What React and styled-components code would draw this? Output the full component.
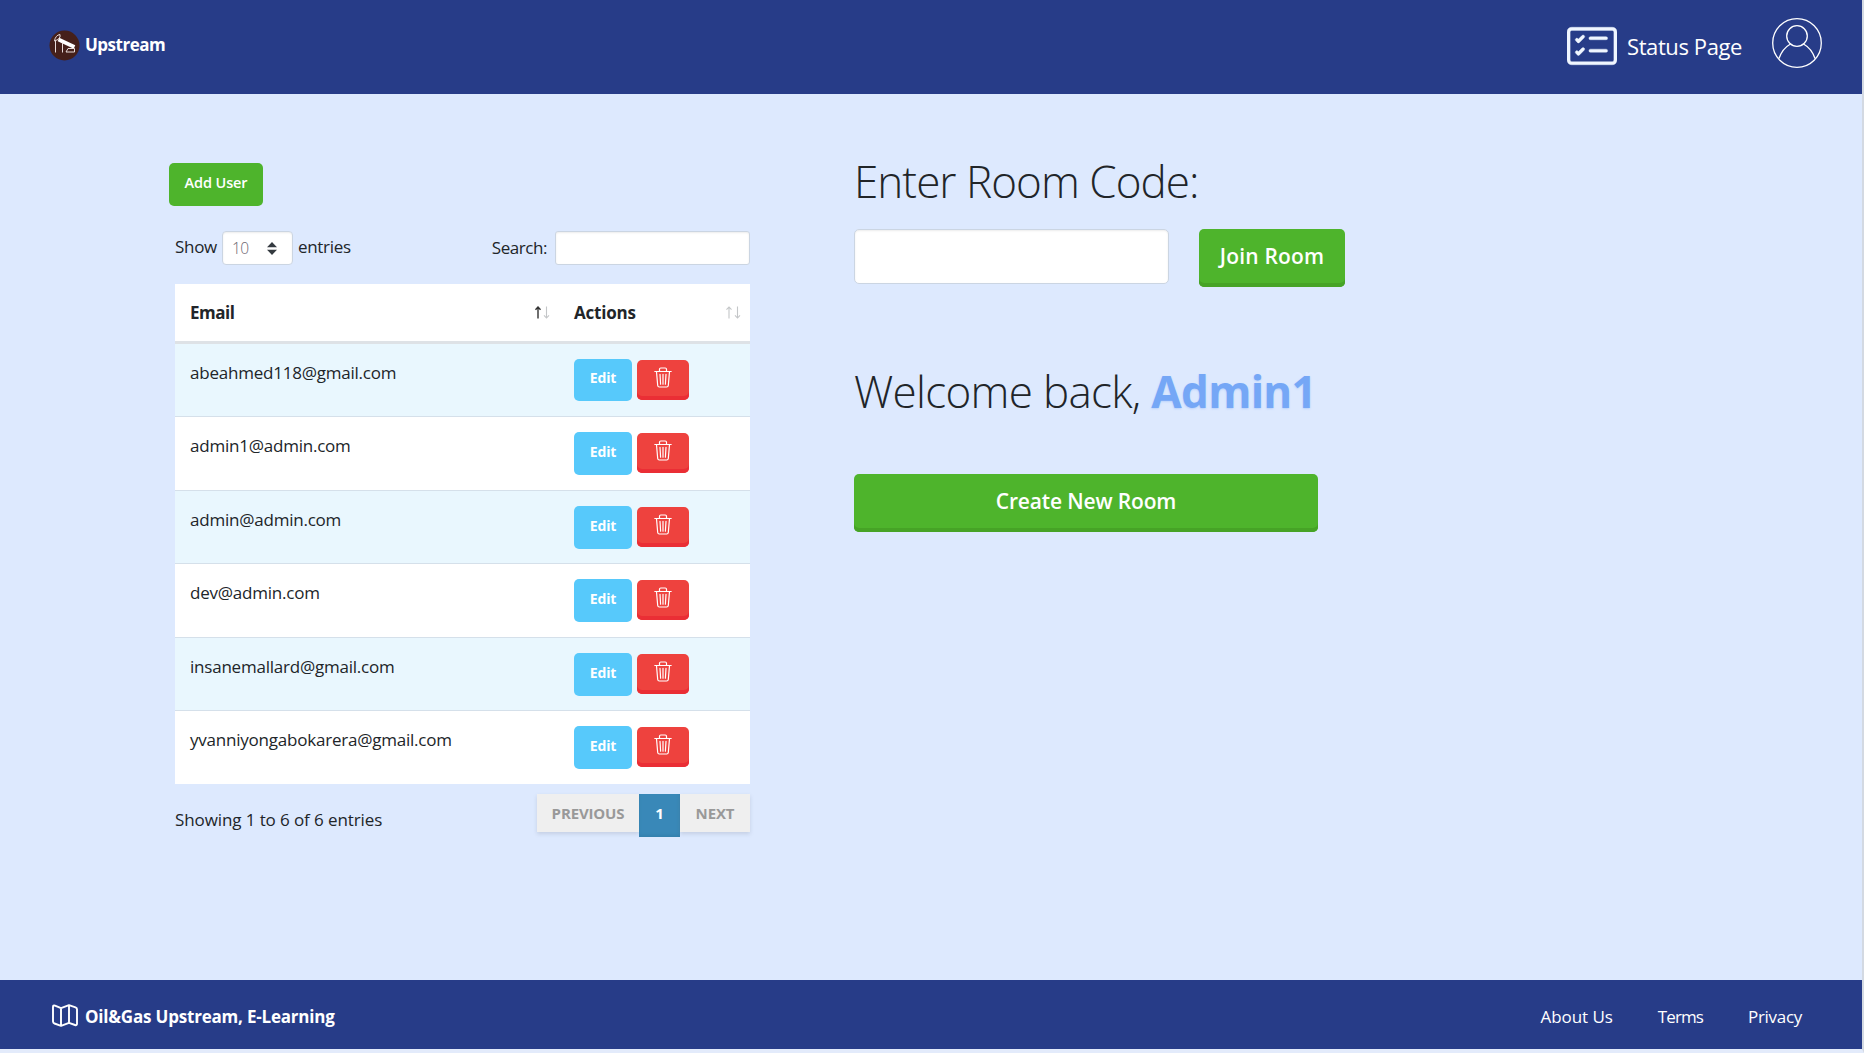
import React from "react";
import styled, { createGlobalStyle, css } from "styled-components";

const Global = createGlobalStyle`
  *, *::before, *::after { box-sizing: border-box; }
  body {
    margin: 0;
    background: #dde9fe;
    color: #212529;
    font: 400 16px/24px "Open Sans", "Noto Sans", sans-serif;
    overflow: hidden;
  }
  button, input { font-family: inherit; }
`;

const Page = styled.div`
  height: 1053px;
  display: flex;
  flex-direction: column;
  border-right: 2px solid #d3d9e2;
  border-bottom: 4px solid #e3ebfb;
`;
const bar = css`
  background: #273c88;
  color: #fff;
  display: flex;
  align-items: center;
  justify-content: space-between;
  flex: none;
`;
const Header = styled.header`
  ${bar}
  height: 94px;
  padding: 0 40px 4px 49px;
`;
const Footer = styled.footer`
  ${bar}
  height: 69px;
  padding: 4px 60px 0 52px;
`;
const Label = styled.span`
  display: inline-block;
  white-space: nowrap;
  font-size: ${(p) => p.$size || 17}px;
  font-weight: ${(p) => p.$weight || 400};
  letter-spacing: ${(p) => p.$track || 0}px;
`;
const Brand = styled.a`
  display: flex;
  align-items: center;
  gap: ${(p) => p.$gap}px;
`;
const Account = styled.nav`
  display: flex;
  align-items: flex-start;
  height: 54px;
`;
const StatusLink = styled.a`
  display: flex;
  align-items: center;
  gap: 10px;
  margin-right: 30px;
  padding-top: 3px;
`;
const Links = styled.nav`
  display: flex;
  gap: 45px;
`;
const Main = styled.main`
  flex: 1;
  display: flex;
  align-items: flex-start;
`;
const Users = styled.section`
  margin-left: 169px;
  width: 581px;
  padding-top: 69px;
`;
const Rooms = styled.section`
  margin-left: 104px;
  width: 500px;
  padding-top: 60px;
`;
const Button = styled.button`
  border: 0;
  color: #fff;
  background: ${(p) => p.$bg || "#4eb42c"};
  box-shadow: inset 0 -${(p) => (p.$edge ? 4 : 0)}px 0 ${(p) => p.$edge || "transparent"};
  border-radius: 5px;
  display: flex;
  align-items: center;
  justify-content: center;
  width: ${(p) => p.$w}px;
  height: ${(p) => p.$h}px;
  padding: 0 0 5px;
  flex: none;
`;
const DeleteButton = styled(Button)`
  margin-top: 1px;
`;
const Panel = styled.div`
  padding-left: 6px;
`;
const Controls = styled.div`
  display: flex;
  justify-content: space-between;
  align-items: center;
  height: 34px;
  margin-top: 25px;
`;
const Control = styled.label`
  display: flex;
  align-items: center;
  gap: ${(p) => p.$gap}px;
`;
const ShowText = styled(Label)`
  padding-bottom: 2px;
`;
const field = css`
  background: #fff;
  border: 1px solid #cbd5e2;
  box-shadow: inset 0 1px 2px rgba(0, 0, 0, 0.08);
`;
const PageSize = styled.span`
  ${field}
  width: 71px;
  height: 34px;
  border-radius: 4px;
  display: flex;
  align-items: center;
  justify-content: space-between;
  padding: 0 15px 0 9px;
  color: #6d6670;
`;
const Input = styled.input`
  ${field}
  width: ${(p) => p.$w}px;
  height: ${(p) => p.$h}px;
  border-radius: ${(p) => p.$r}px;
  padding: 0 10px;
`;
const Table = styled.div`
  margin-top: 19px;
  background: #fff;
  width: 575px;
`;
const Row = styled.div`
  display: grid;
  grid-template-columns: 384px 1fr;
  height: ${(p) => p.$h}px;
  background: ${(p) => (p.$striped ? "#e9f7fe" : "#fff")};
  border-top: ${(p) => (p.$first ? 0 : 1)}px solid #d5e0ea;
`;
const HeadRow = styled(Row)`
  border-top: 0;
  border-bottom: 3px solid #dee2e6;
`;
const HeadCell = styled.div`
  display: flex;
  align-items: center;
  justify-content: space-between;
  padding: 0 9px 0 15px;
`;
const Cell = styled.div`
  display: flex;
  gap: 5px;
  align-items: flex-start;
  padding: ${(p) => p.$top}px 15px 0;
`;
const Bottom = styled.div`
  display: flex;
  justify-content: space-between;
  align-items: flex-start;
  padding-top: 10px;
`;
const Info = styled.div`
  padding-top: 14px;
`;
const Pager = styled.div`
  display: flex;
  align-items: flex-start;
`;
const PageItem = styled.div`
  width: ${(p) => p.$w}px;
  height: ${(p) => (p.$active ? 43 : 38)}px;
  display: flex;
  justify-content: center;
  padding-top: 7px;
  background: ${(p) => (p.$active ? "#3988b8" : "#efefef")};
  color: ${(p) => (p.$active ? "#fff" : "#999")};
  box-shadow: ${(p) => (p.$active ? "inset 0 -2px 3px #3480ad" : "0 2px 4px rgba(110,120,130,.22)")};
`;
const Heading = styled.h1`
  margin: ${(p) => p.$top || 0}px 0 0;
  height: 54px;
  line-height: 54px;
  white-space: nowrap;
  display: flex;
  align-items: center;
`;
const Name = styled.span`
  color: #75a7f6;
  display: flex;
  text-shadow: 0 1px 2px rgba(117, 167, 246, 0.35);
`;
const JoinRow = styled.div`
  display: flex;
  gap: 30px;
  margin-top: 21px;
`;
const Spacer = styled.div`
  height: ${(p) => p.$h}px;
`;

const PumpLogo = () => (
  <svg width="31" height="31" viewBox="0 0 31 31" fill="none">
    <circle cx="15.5" cy="15.5" r="15" fill="#45201a" />
    <path d="M9.500 9.500 25.500 17" stroke="#fff" strokeWidth="3.600" />
    <path d="M11 4.500C8 4.800 6 7.500 5.500 11L9 9.500 11 7ZM6.500 11V22.500M13.500 12.500V22.500M17 22H25.500V18.500H19Z" stroke="#e8dcda" />
  </svg>
);
const ChecklistIcon = () => (
  <svg width="50" height="50" viewBox="0 0 16 16" fill="#f0f6ff" stroke="#f0f6ff" strokeWidth=".12">
    <path d="M14.500 3a.5.5 0 0 1 .5.5v9a.5.5 0 0 1-.5.5h-13a.5.5 0 0 1-.5-.5v-9a.5.5 0 0 1 .5-.5zm-13-1A1.500 1.500 0 0 0 0 3.500v9A1.500 1.500 0 0 0 1.500 14h13a1.500 1.500 0 0 0 1.500-1.500v-9A1.500 1.500 0 0 0 14.500 2z" />
    <path d="M7 5.500a.5.5 0 0 1 .5-.5h5a.5.5 0 0 1 0 1h-5a.5.5 0 0 1-.5-.5m-1.496-.854a.5.5 0 0 1 0 .708l-1.500 1.500a.5.5 0 0 1-.708 0l-.5-.5a.5.5 0 1 1 .708-.708l.146.147 1.146-1.147a.5.5 0 0 1 .708 0M7 9.500a.5.5 0 0 1 .5-.5h5a.5.5 0 0 1 0 1h-5a.5.5 0 0 1-.5-.5m-1.496-.854a.5.5 0 0 1 0 .708l-1.500 1.500a.5.5 0 0 1-.708 0l-.5-.5a.5.5 0 0 1 .708-.708l.146.147 1.146-1.147a.5.5 0 0 1 .708 0" />
  </svg>
);
const UserIcon = () => (
  <svg width="50" height="50" viewBox="0 0 50 50" fill="none" stroke="#fff" strokeWidth="1.300">
    <circle cx="25" cy="25" r="24.300" />
    <circle cx="25" cy="18" r="10.300" />
    <path d="M7 40.500C9.500 33 14 28.500 18.500 26M43 40.500C40.500 33 36 28.500 31.500 26" />
  </svg>
);
const MapIcon = () => (
  <svg width="26" height="23" viewBox="0 0 26 23" fill="none" stroke="#fff" strokeWidth="1.900" strokeLinejoin="round">
    <path d="M1 3Q1 1 3 1.600L9 4.200 17 1.200 23.500 3.300Q25 3.800 25 5.200V19.800Q25 21.700 23 21L17 18.800 9 21.800 2.500 19.500Q1 19 1 17.500ZM9 4.200V21.800M17 1.200V18.800" />
  </svg>
);
const FooterMark = styled.span`
  display: flex;
  padding-bottom: 3px;
`;
const TrashIcon = () => (
  <svg width="18" height="21" viewBox="0 0 18 21" fill="none" stroke="#fff" strokeWidth="1.200" strokeLinecap="round" strokeLinejoin="round">
    <path d="M.8 4.500H17.200M5.500 4.300V2.300Q5.500 1 6.800 1H11.200Q12.500 1 12.500 2.300V4.300M2.500 4.800 3.700 18.500Q3.900 20 5.300 20H12.700Q14.100 20 14.300 18.500L15.500 4.800M6 7.300 6.600 17.200M9 7.300V17.200M12 7.300 11.400 17.200" />
  </svg>
);
const SelectArrows = () => (
  <svg width="10" height="13" viewBox="0 0 10 13" fill="#343a40">
    <path d="M0 5.300 5 0 10 5.300ZM0 7.700H10L5 13Z" />
  </svg>
);
const SortIcon = ({ active }) => (
  <svg width="16" height="13" viewBox="0 0 16 13" fill="none" stroke="#c4c6c8" strokeWidth="1.100">
    <path d="M4 12.500V1M1.500 3.700 4 1 6.500 3.700" stroke={active ? "#333" : "#c4c6c8"} strokeWidth={active ? 1.4 : 1.1} />
    <path d="M12.500 .5V12M10 9.300 12.500 12 15 9.300" />
  </svg>
);

const emails = [
  "abeahmed118@gmail.com",
  "admin1@admin.com",
  "admin@admin.com",
  "dev@admin.com",
  "insanemallard@gmail.com",
  "yvanniyongabokarera@gmail.com",
];
const rowHeights = [72, 74, 73, 74, 73, 74];

const UserRow = ({ email, index }) => (
  <Row $h={rowHeights[index]} $striped={index % 2 === 0} $first={index === 0}>
    <Cell $top={17}>
      <Label $track={-0.22}>{email}</Label>
    </Cell>
    <Cell $top={15}>
      <Button $w={58} $h={index === 0 ? 42 : 43} $bg="#57c9fb">
        <Label $size={14} $weight={700} $track={-0.1}>Edit</Label>
      </Button>
      <DeleteButton $w={52} $h={40} $bg="#ee423e" $edge="#ea2e35">
        <TrashIcon />
      </DeleteButton>
    </Cell>
  </Row>
);

export default function App() {
  return (
    <>
      <Global />
      <Page>
        <Header>
          <Brand $gap={5}>
            <PumpLogo />
            <Label $weight={700} $track={-0.5}>Upstream</Label>
          </Brand>
          <Account>
            <StatusLink>
              <ChecklistIcon />
              <Label $size={22} $track={-0.4}>Status Page</Label>
            </StatusLink>
            <UserIcon />
          </Account>
        </Header>
        <Main>
          <Users>
            <Button $w={94} $h={43}>
              <Label $size={14.5} $weight={600} $track={-0.1}>Add User</Label>
            </Button>
            <Panel>
              <Controls>
                <Control $gap={5}>
                  <ShowText $track={-0.3}>Show</ShowText>
                  <PageSize>
                    <Label $size={15.5} $weight={300} $track={-0.5}>10</Label>
                    <SelectArrows />
                  </PageSize>
                  <ShowText $track={-0.3}>entries</ShowText>
                </Control>
                <Control $gap={8}>
                  <Label $track={-0.45}>Search:</Label>
                  <Input $w={195} $h={34} $r={3} />
                </Control>
              </Controls>
              <Table>
                <HeadRow $h={60}>
                  <HeadCell>
                    <Label $weight={700} $track={-0.5}>Email</Label>
                    <SortIcon active />
                  </HeadCell>
                  <HeadCell>
                    <Label $weight={700} $track={-0.2}>Actions</Label>
                    <SortIcon />
                  </HeadCell>
                </HeadRow>
                {emails.map((email, i) => (
                  <UserRow key={email} email={email} index={i} />
                ))}
              </Table>
              <Bottom>
                <Info>
                  <Label $track={-0.1}>Showing 1 to 6 of 6 entries</Label>
                </Info>
                <Pager>
                  <PageItem $w={102}><Label $size={15} $weight={700} $track={-0.15}>PREVIOUS</Label></PageItem>
                  <PageItem $w={41} $active><Label $size={15} $weight={700}>1</Label></PageItem>
                  <PageItem $w={70}><Label $size={15} $weight={700} $track={-0.1}>NEXT</Label></PageItem>
                </Pager>
              </Bottom>
            </Panel>
          </Users>
          <Rooms>
            <Heading>
              <Label $size={44} $weight={300} $track={-0.95}>Enter Room Code:</Label>
            </Heading>
            <JoinRow>
              <Input $w={315} $h={55} $r={5} />
              <Button $w={146} $h={58} $edge="#46a326">
                <Label $size={21} $weight={600} $track={0.2}>Join Room</Label>
              </Button>
            </JoinRow>
            <Heading $top={77}>
              <Label $size={44} $weight={300} $track={-0.7}>Welcome back,&nbsp;</Label>
              <Name><Label $size={44} $weight={700} $track={-0.7}>Admin1</Label></Name>
            </Heading>
            <Spacer $h={56} />
            <Button $w={464} $h={58} $edge="#46a326">
              <Label $size={21} $weight={600} $track={-0.15}>Create New Room</Label>
            </Button>
          </Rooms>
        </Main>
        <Footer>
          <Brand $gap={7}>
            <FooterMark>
              <MapIcon />
            </FooterMark>
            <Label $weight={700} $track={-0.2}>Oil&amp;Gas Upstream, E-Learning</Label>
          </Brand>
          <Links>
            <Label $track={-0.05}>About Us</Label>
            <Label $track={-0.9}>Terms</Label>
            <Label $track={-0.3}>Privacy</Label>
          </Links>
        </Footer>
      </Page>
    </>
  );
}
